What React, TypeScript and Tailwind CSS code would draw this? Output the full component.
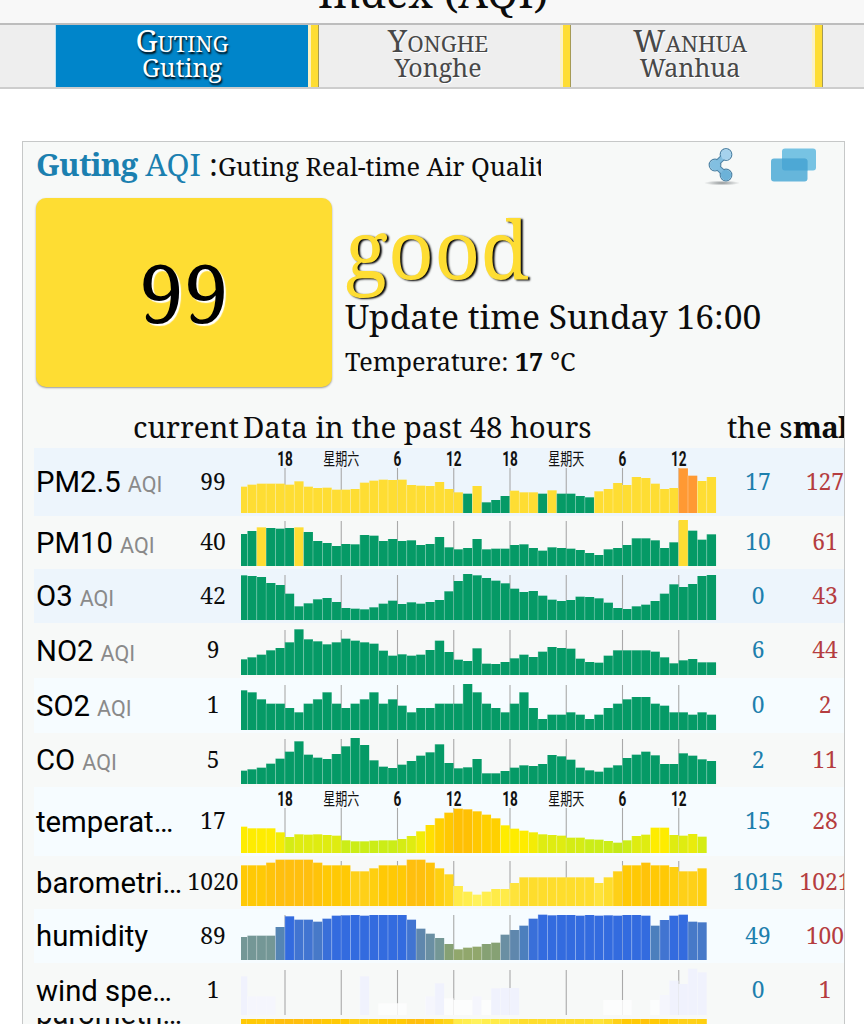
import clsx from "clsx";

type Stop = [number, string];

type Row = {
  name: string;
  aqi?: boolean;
  current: string;
  min: string;
  max: string;
  height: string;
  bg: string;
  scale?: boolean;
  values: number[];
  color: (v: number, i: number) => string;
};

const GREEN = "#059a66";
const YELLOW = "#fedd33";
const ORANGE = "#ff9933";

// picks the colour of the highest stop that is not above the value
const ramp = (stops: Stop[]) => (v: number) => {
  let color = stops[0][1];
  for (const [from, c] of stops) if (v >= from) color = c;
  return color;
};

const marked = (indexes: number[], color: string) => (_: number, i: number) =>
  indexes.includes(i) ? color : GREEN;

const PM25_GREEN = [24, 26, 27, 28, 32, 34, 35, 36, 37];

const tempColor = ramp([
  [0, "#c5e918"], [34, "#cbed17"], [42, "#d5ec14"], [50, "#dfec11"], [57, "#e9ec0c"],
  [62, "#f3ec06"], [67, "#feec00"], [84, "#ffdf00"], [100, "#ffd000"], [118, "#ffc802"], [128, "#ffc004"],
]);
const baroColor = ramp([
  [0, "#fff25c"], [40, "#ffee4e"], [50, "#ffeb48"], [65, "#fee33a"], [80, "#fedd2c"],
  [92, "#fed61c"], [102, "#fed018"], [112, "#fecf10"], [120, "#ffc905"], [128, "#ffc30a"], [137, "#ffbf0e"],
]);
const humidityColor = ramp([
  [0, "#91a76c"], [44, "#86a174"], [60, "#749796"], [75, "#6a8fa3"], [88, "#5f87ad"],
  [95, "#5585b4"], [102, "#4c7fbd"], [112, "#4779c8"], [118, "#4174d1"], [123, "#396fd9"], [131, "#336bdf"],
]);
const windColor = (v: number) => (v > 60 ? "#f0f2fd" : v > 50 ? "#f5f6fd" : "#fcfdfd");

const rows: Row[] = [
  {
    name: "PM2.5", aqi: true, current: "99", min: "17", max: "127", height: "h-[68px]", bg: "bg-[#edf5fc]", scale: true,
    values: [79, 85, 88, 88, 88, 85, 95, 79, 75, 76, 70, 70, 72, 91, 97, 100, 99, 100, 84, 82, 81, 93, 72, 62, 58, 81, 32, 39, 51, 67, 62, 62, 58, 68, 58, 58, 51, 47, 65, 72, 90, 84, 108, 105, 88, 72, 75, 134, 112, 96, 108],
    color: (_, i) => (PM25_GREEN.includes(i) ? GREEN : i === 47 || i === 48 ? ORANGE : YELLOW),
  },
  {
    name: "PM10", aqi: true, current: "40", min: "10", max: "61", height: "h-[53px]", bg: "bg-[#f7f9f8]",
    values: [96, 105, 116, 114, 112, 114, 116, 102, 75, 69, 60, 66, 65, 93, 91, 75, 81, 75, 77, 63, 66, 87, 56, 50, 54, 81, 50, 52, 52, 63, 65, 54, 46, 56, 54, 52, 48, 39, 33, 50, 54, 63, 83, 83, 77, 54, 71, 138, 106, 79, 95],
    color: marked([2, 6, 47], YELLOW),
  },
  {
    name: "O3", aqi: true, current: "42", min: "0", max: "43", height: "h-[54px]", bg: "bg-[#edf5fc]",
    values: [134, 132, 129, 111, 105, 79, 41, 50, 62, 66, 54, 36, 34, 32, 38, 49, 58, 48, 53, 49, 54, 60, 86, 117, 138, 134, 126, 118, 110, 94, 84, 87, 73, 61, 57, 60, 70, 69, 65, 52, 36, 33, 41, 46, 57, 79, 107, 99, 108, 132, 135],
    color: () => GREEN,
  },
  {
    name: "NO2", aqi: true, current: "9", min: "6", max: "44", height: "h-[55px]", bg: "bg-[#f7f9f8]",
    values: [47, 53, 61, 74, 81, 98, 137, 107, 101, 92, 98, 109, 103, 98, 94, 73, 58, 62, 58, 61, 75, 103, 69, 46, 42, 80, 34, 33, 39, 50, 61, 54, 70, 84, 81, 79, 49, 39, 37, 58, 74, 74, 74, 74, 70, 53, 35, 44, 48, 38, 38],
    color: () => GREEN,
  },
  {
    name: "SO2", aqi: true, current: "1", min: "0", max: "2", height: "h-[55px]", bg: "bg-[#f6fcff]",
    values: [119, 113, 92, 79, 79, 66, 53, 79, 92, 113, 79, 66, 79, 92, 113, 79, 92, 73, 53, 66, 66, 79, 79, 79, 138, 113, 79, 66, 53, 79, 113, 66, 33, 46, 46, 53, 46, 33, 46, 66, 79, 92, 99, 99, 79, 73, 53, 53, 46, 53, 46],
    color: () => GREEN,
  },
  {
    name: "CO", aqi: true, current: "5", min: "2", max: "11", height: "h-[54px]", bg: "bg-[#f7f9f8]",
    values: [40, 44, 49, 61, 76, 97, 128, 88, 79, 75, 90, 113, 138, 117, 71, 52, 48, 58, 69, 85, 95, 119, 63, 47, 50, 75, 32, 32, 39, 49, 56, 54, 60, 87, 83, 73, 49, 41, 37, 49, 56, 78, 88, 97, 86, 60, 60, 92, 85, 74, 69],
    color: () => GREEN,
  },
  {
    name: "temperat…", current: "17", min: "15", max: "28", height: "h-[69px]", bg: "bg-[#f6fcff]", scale: true,
    values: [79, 74, 74, 74, 62, 48, 56, 55, 56, 54, 52, 38, 35, 35, 37, 38, 38, 42, 51, 65, 84, 104, 121, 133, 131, 125, 115, 104, 83, 73, 67, 62, 56, 54, 52, 46, 46, 41, 40, 36, 31, 38, 51, 55, 76, 76, 54, 52, 57, 49],
    color: tempColor,
  },
  {
    name: "barometri…", current: "1020", min: "1015", max: "1021", height: "h-[53px]", bg: "bg-[#f7f9f8]",
    values: [122, 122, 122, 130, 139, 139, 139, 139, 130, 122, 122, 122, 104, 104, 113, 122, 122, 122, 139, 139, 130, 113, 95, 60, 43, 34, 43, 51, 51, 69, 86, 86, 86, 86, 86, 86, 86, 86, 69, 86, 104, 122, 122, 130, 122, 122, 117, 104, 104, 113],
    color: baroColor,
  },
  {
    name: "humidity", current: "89", min: "49", max: "100", height: "h-[54px]", bg: "bg-[#f6fcff]",
    values: [69, 73, 73, 73, 99, 131, 121, 121, 115, 124, 133, 134, 135, 133, 135, 135, 135, 135, 121, 94, 79, 66, 48, 32, 37, 40, 48, 52, 76, 90, 103, 124, 136, 134, 135, 135, 133, 135, 133, 134, 133, 135, 135, 133, 103, 120, 133, 136, 115, 113],
    color: humidityColor,
  },
  {
    name: "wind spe…", current: "1", min: "0", max: "1", height: "h-[55px]", bg: "bg-[#f7f9f8]",
    values: [116, 56, 56, 56, 0, 0, 0, 0, 0, 0, 0, 0, 0, 116, 0, 35, 35, 35, 0, 0, 56, 95, 50, 45, 45, 56, 45, 80, 81, 81, 0, 0, 0, 0, 0, 0, 0, 0, 0, 45, 45, 45, 0, 0, 45, 60, 103, 93, 139, 128],
    color: windColor,
  },
];

const ticks = ["18", "星期六", "6", "12", "18", "星期天", "6", "12"];

const STEP = 9.375;
const FIRST = 6.3;

function Chart({ row }: { row: Row }) {
  const height = row.scale ? 65 : 50;
  const bottom = height - 3;
  return (
    <svg width="476" height={height} className="block">
      {ticks.map((t, i) => {
        const x = 44 + i * 56.25;
        const cjk = t.length === 3;
        return (
          <g key={i}>
            <line x1={x} x2={x} y1={bottom - 45} y2={bottom} stroke="#a9a9a9" strokeWidth="1.1" />
            {row.scale && (
              <text
                x={x}
                y={cjk ? 13.5 : 15}
                textAnchor="middle"
                fontSize={cjk ? 17 : 20}
                fontWeight={cjk ? 400 : 700}
                fontFamily={cjk ? "'Noto Sans CJK SC', sans-serif" : "Roboto, sans-serif"}
                textLength={cjk ? 36 : t.length * 7.8}
                lengthAdjust="spacingAndGlyphs"
                fill="#111"
              >
                {t}
              </text>
            )}
          </g>
        );
      })}
      {row.values.map((v, i) => {
        const x = i === 0 ? 0 : FIRST + (i - 1) * STEP;
        const w = i === 0 ? FIRST : STEP;
        const h = v / 3;
        return (
          <g key={i}>
            <rect x={x} y={bottom - h} width={w} height={h} fill={row.color(v, i)} />
            {i > 0 && v > 0 && (
              <rect x={x - 0.3} y={bottom - h} width="0.8" height={h} fill="#fff" fillOpacity="0.3" />
            )}
          </g>
        );
      })}
    </svg>
  );
}

function DataRow({ row }: { row: Row }) {
  return (
    <div className={clsx("flex w-[830px] shrink-0 items-center", row.height, row.bg)}>
      <div className="w-[153px] whitespace-nowrap pl-[2px] pt-[2px] font-[Roboto] text-[29.3px] leading-none text-black">
        {row.name}
        {row.aqi && <span className="ml-[7px] text-[21.5px] text-[#8a8a8a]">AQI</span>}
      </div>
      <div className="w-[52px] text-center text-[22.8px]">{row.current}</div>
      <div className="ml-[2px] w-[476px] shrink-0 self-end">
        <Chart row={row} />
      </div>
      <div className="w-[82px] shrink-0 text-center text-[22.8px] text-[#1d7fad]">{row.min}</div>
      <div className="flex w-[52px] shrink-0 justify-center whitespace-nowrap text-[22.8px] text-[#b53d40]">
        {row.max}
      </div>
    </div>
  );
}

function Tab({ name, active }: { name: string; active?: boolean }) {
  return (
    <div
      className={clsx(
        "flex shrink-0 flex-col items-center leading-none",
        active
          ? "w-[252px] bg-[#0085ca] text-white [text-shadow:1px_2px_2px_#000]"
          : "w-[241px] bg-[#eeeeee] pr-[3px] text-[#484848] [text-shadow:1px_1px_0_#fff]"
      )}
    >
      <div className="h-[28px] text-[22.3px] uppercase leading-[30px] first-letter:text-[31px]">{name}</div>
      <div className="text-[25px] leading-[28px]">{name}</div>
    </div>
  );
}

const Separator = () => (
  <div className="w-[11px] shrink-0 border-l-[3px] border-r border-l-[#fbf1c4] border-r-[#a59a55] bg-[#fedd33]" />
);

function ShareIcon() {
  return (
    <svg width="36" height="40" viewBox="0 0 36 40" className="shrink-0">
      <defs>
        <radialGradient id="ground">
          <stop offset="0" stopColor="#8f9496" />
          <stop offset="1" stopColor="#8f9496" stopOpacity="0" />
        </radialGradient>
      </defs>
      <ellipse cx="18" cy="36" rx="18" ry="2.500" fill="url(#ground)" />
      <g fill="none" stroke="#4f84a6">
        <path d="M22 7.500L11 18L22 28" strokeWidth="6" />
        <circle cx="22" cy="7.500" r="5.800" strokeWidth="1.200" />
        <circle cx="11" cy="18" r="5.800" strokeWidth="1.200" />
        <circle cx="22" cy="28" r="5.800" strokeWidth="1.200" />
      </g>
      <path d="M22 7.500L11 18L22 28" fill="none" stroke="#80bcde" strokeWidth="4" />
      <circle cx="22" cy="7.500" r="5.200" fill="#a5d2ed" />
      <circle cx="11" cy="18" r="5.200" fill="#82bfe1" />
      <circle cx="22" cy="28" r="5.200" fill="#6cb2d8" />
    </svg>
  );
}

function WindowsIcon() {
  return (
    <svg width="45" height="34" viewBox="0 0 45 34" className="shrink-0">
      <rect x="11" y="0.500" width="34" height="22" rx="3" fill="#77c3e3" />
      <rect x="0" y="10.500" width="36.500" height="23" rx="3" fill="#66b6db" />
      <path d="M11 10.500H33.500Q36.500 10.500 36.500 13.500V22.500H14Q11 22.500 11 19.500Z" fill="#4da8d5" />
    </svg>
  );
}

export default function App() {
  return (
    <div className="h-[1024px] w-[864px] overflow-hidden bg-white font-['Noto_Serif','Droid_Serif','DejaVu_Serif',serif] text-[#0c0c0c]">
      <div className="flex h-[23px] items-end justify-center bg-[#f8f8f8]">
        <h1 className="h-[52px] whitespace-nowrap pl-[2px] text-[42px] leading-[42px]">Index (AQI)</h1>
      </div>
      <nav className="flex h-[66px] border-y-2 border-t-[#bdbdbd] border-b-[#cdcdcd] bg-[#eeeeee]">
        <div className="w-[56px] shrink-0 border-r border-[#b8dff1]" />
        <Tab name="Guting" active />
        <Separator />
        <Tab name="Yonghe" />
        <Separator />
        <Tab name="Wanhua" />
        <Separator />
      </nav>

      <main className="ml-[22px] mt-[52px] h-[890px] w-[823px] overflow-hidden border border-[#c6c8c8] bg-[#f7f9f8]">
        <div className="flex h-[56px] items-start pl-[13px]">
          <h2 className="w-[505px] overflow-hidden whitespace-nowrap pt-[3px] text-[31px] leading-[38px]">
            <span className="text-[#1b80b0]">
              <b className="tracking-[-0.8px]">Guting</b> AQI
            </span>{" "}
            :<span className="text-[25.3px]">Guting Real-time Air Quality</span>
          </h2>
          <div className="ml-[163px] mt-[5px] flex items-start gap-[31px]">
            <ShareIcon />
            <div className="pt-[1px]">
              <WindowsIcon />
            </div>
          </div>
        </div>

        <section className="flex h-[189px] gap-[13px] pl-[13px]">
          <div className="flex w-[296px] shrink-0 items-center justify-center rounded-[10px] bg-[#fedd33] pb-[1px] text-[80px] text-black shadow-[0_1px_2px_#999] [text-shadow:2px_2px_1px_#fff]">
            99
          </div>
          <div className="whitespace-nowrap">
            <div className="h-[98px] text-[80px] leading-[100px] text-[#fedd33] [text-shadow:2px_1px_2px_#000]">
              good
            </div>
            <div className="text-[33.6px] leading-[40px]">Update time Sunday 16:00</div>
            <div className="mt-[5px] text-[25.2px] leading-[40px]">
              Temperature: <b>17</b> °C
            </div>
          </div>
        </section>

        <section className="pl-[11px] pt-[11px]">
          <div className="flex h-[50px] items-center whitespace-nowrap pt-[9px] text-[29.4px]">
            <div className="w-[209px] shrink-0 pl-[99px]">current</div>
            <div className="w-[484px] shrink-0">Data in the past 48 hours</div>
            <div className="w-[66px] shrink-0 overflow-hidden">the small</div>
            <b className="tracking-[-0.8px]">mal</b>
          </div>
          {rows.map((row) => (
            <DataRow key={row.name} row={row} />
          ))}
          {/* next barometric row, only its top edge is in view */}
          <div className="flex h-[8px] w-[830px] bg-[#f7f9f8]">
            <div className="h-[8px] w-[207px] shrink-0 overflow-hidden pl-[2px] font-[Roboto] text-[29.3px] leading-none">
              <div className="-mt-[18px]">barometri…</div>
            </div>
            <div className="mt-px flex h-[7px]">
              {rows[7].values.map((v, i) => (
                <div
                  key={i}
                  className="h-full border-r border-white/20"
                  style={{ width: i === 0 ? FIRST : STEP, backgroundColor: rows[7].color(v, i) }}
                />
              ))}
            </div>
          </div>
        </section>
      </main>
    </div>
  );
}
